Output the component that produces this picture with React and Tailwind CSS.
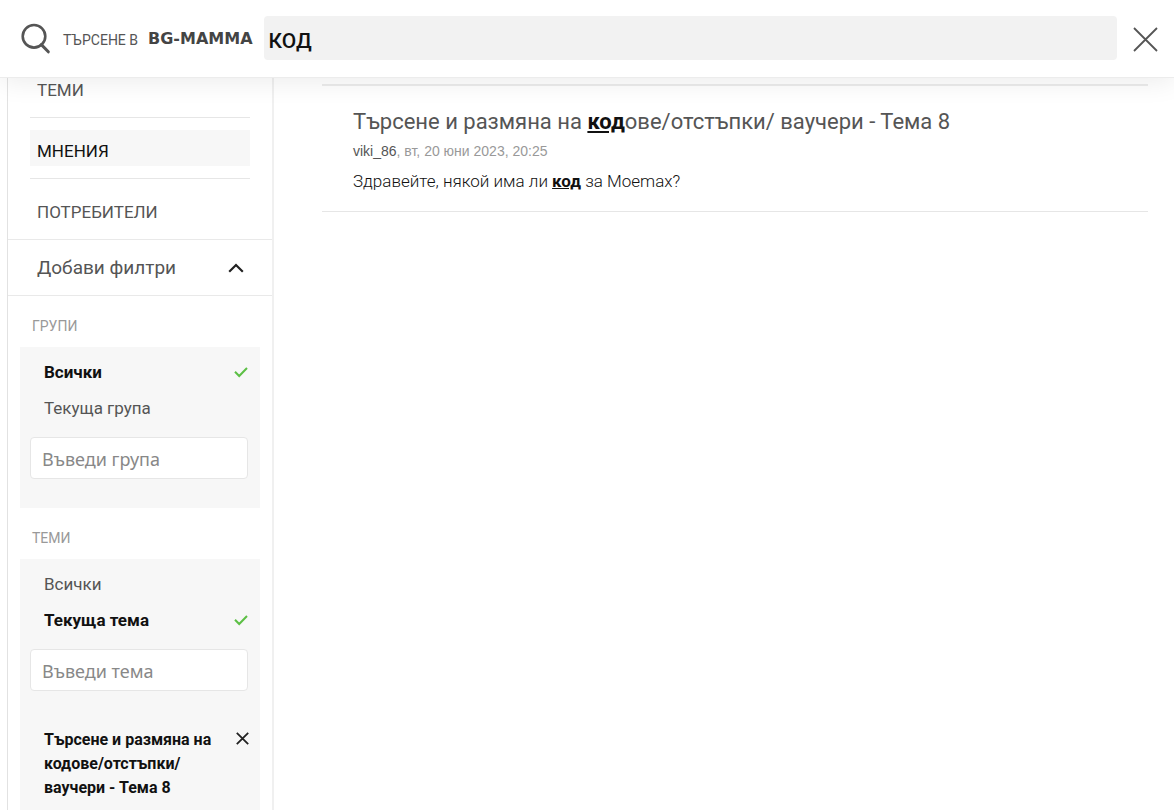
import { useState } from "react";

const tabs = ["ТЕМИ", "МНЕНИЯ", "ПОТРЕБИТЕЛИ"];

function Check() {
  return (
    <svg width="14" height="12" viewBox="0 0 14 12" fill="none" stroke="#5cbf45" strokeWidth="2" aria-hidden="true">
      <path d="M1 4.7 5.2 9 13 1" />
    </svg>
  );
}

function FilterGroup({ title, options, selected, placeholder, children }) {
  const [active, setActive] = useState(selected);
  return (
    <section className="px-3">
      <h2 className="h-[51px] pt-[18px] pl-3 text-sm leading-6 text-[#999]">{title}</h2>
      <div className="bg-[#f7f7f7] pt-2 pb-[29px]">
        {options.map((name) => (
          <button
            key={name}
            type="button"
            onClick={() => setActive(name)}
            className={
              name === active
                ? "flex h-9 w-full items-center justify-between pr-3 pl-6 text-left text-[17px] font-bold text-[#111]"
                : "flex h-9 w-full items-center justify-between pr-3 pl-6 text-left text-[17px] text-[#555]"
            }
          >
            {name}
            {name === active && <Check />}
          </button>
        ))}
        <div className="pt-[10px] pr-3 pl-[10px]">
          <input
            type="text"
            aria-label={placeholder}
            placeholder={placeholder}
            className="h-[42px] w-full rounded-sm border border-[#e6e6e6] bg-white px-[11px] pt-px font-['Noto_Sans',sans-serif] text-lg text-[#444] placeholder:text-[#888]"
          />
        </div>
        {children}
      </div>
    </section>
  );
}

export default function App() {
  const [tab, setTab] = useState("МНЕНИЯ");
  const [open, setOpen] = useState(true);
  return (
    <div className="flex h-screen flex-col overflow-hidden bg-white font-[Roboto,sans-serif] text-[#555]">
      <header className="relative z-10 flex h-[78px] shrink-0 items-start border-b border-[#ececec] bg-white pt-4 pr-4 pl-5 shadow-[0_4px_26px_rgba(0,0,0,0.08)]">
        <svg className="mt-[6px] shrink-0" width="31" height="32" viewBox="0 0 31 32" fill="none" stroke="#555" aria-hidden="true">
          <circle cx="14" cy="14.3" r="11.3" strokeWidth="2.6" />
          <path d="M21.3 22.6 28.3 29.8" strokeWidth="3" strokeLinecap="round" />
        </svg>
        <label htmlFor="q" className="flex h-11 shrink-0 items-center pl-3 whitespace-nowrap">
          <span className="pt-1 text-sm">ТЪРСЕНЕ В</span>
          <span className="pt-px pl-[10px] font-['DejaVu_Sans',sans-serif] text-base font-bold text-[#444]">BG-MAMMA</span>
        </label>
        <input
          id="q"
          type="search"
          defaultValue="КОД"
          className="ml-[11px] h-11 min-w-0 flex-1 rounded-sm bg-[#f2f2f2] px-[5px] pt-[6px] text-[21px] font-medium text-[#111] outline-none"
        />
        <button type="button" aria-label="Затвори" className="ml-4 pt-[11px]">
          <svg width="25" height="25" viewBox="0 0 25 25" fill="none" stroke="#555" strokeWidth="1.8" aria-hidden="true">
            <path d="M1 1 24 24M24 1 1 24" />
          </svg>
        </button>
      </header>

      <div className="flex min-h-0 flex-1">
        <aside className="-mt-[9px] ml-[7px] w-[267px] shrink-0 border-r-2 border-l border-r-[#f0f0f0] border-l-[#e2e2e2]">
          <nav className="flex flex-col divide-y divide-[#e6e6e6] px-[22px]">
            {tabs.map((name) => (
              <div key={name} className="py-3 first:pt-0">
                <button
                  type="button"
                  onClick={() => setTab(name)}
                  className={
                    name === tab
                      ? "block h-9 w-full bg-[#f7f7f7] px-[7px] pt-2 text-left text-[17px] text-[#111]"
                      : "block h-9 w-full px-[7px] pt-2 text-left text-[17px]"
                  }
                >
                  {name}
                </button>
              </div>
            ))}
          </nav>
          <button
            type="button"
            aria-expanded={open}
            onClick={() => setOpen(!open)}
            className="flex h-[57px] w-full items-center justify-between border-y border-[#e9e9e9] pt-px pr-7 pl-[29px] text-[19px]"
          >
            Добави филтри
            <svg width="16" height="10" viewBox="0 0 16 10" fill="none" stroke="#222" strokeWidth="2.2" aria-hidden="true">
              <path d="M1.2 8.7 8 2 14.8 8.7" />
            </svg>
          </button>
          {open && (
            <>
              <FilterGroup title="ГРУПИ" options={["Всички", "Текуща група"]} selected="Всички" placeholder="Въведи група" />
              <FilterGroup title="ТЕМИ" options={["Всички", "Текуща тема"]} selected="Текуща тема" placeholder="Въведи тема">
                <div className="flex items-start justify-between pt-[37px] pr-[11px] pl-6">
                  <p className="w-44 text-base leading-6 font-bold text-[#111]">Търсене и размяна на кодове/отстъпки/ ваучери - Тема 8</p>
                  <button type="button" aria-label="Премахни" className="pt-1">
                    <svg width="13" height="13" viewBox="0 0 13 13" fill="none" stroke="#222" strokeWidth="1.8" aria-hidden="true">
                      <path d="M.8.8 12.2 12.2M12.2.8.8 12.2" />
                    </svg>
                  </button>
                </div>
              </FilterGroup>
            </>
          )}
        </aside>

        <main className="min-w-0 flex-1 pt-[6px] pr-[26px] pl-12">
          <article className="border-t-2 border-b border-t-[#ececec] border-b-[#e6e6e6] px-[31px] pt-5 pb-[13px]">
            <h1 className="text-[22px] leading-8">
              <a href="#topic">
                Търсене и размяна на <b className="font-bold text-[#111] underline">код</b>ове/отстъпки/ ваучери - Тема 8
              </a>
            </h1>
            <p className="font-['Liberation_Sans',sans-serif] text-sm leading-[26px] text-[#999]">
              <a href="#user" className="text-[#555]">viki_86</a>, вт, 20 юни 2023, 20:25
            </p>
            <p className="text-[17px] leading-[34px] font-light text-[#111]">
              Здравейте, някой има ли <b className="font-bold underline">код</b> за Moemax?
            </p>
          </article>
        </main>
      </div>
    </div>
  );
}
